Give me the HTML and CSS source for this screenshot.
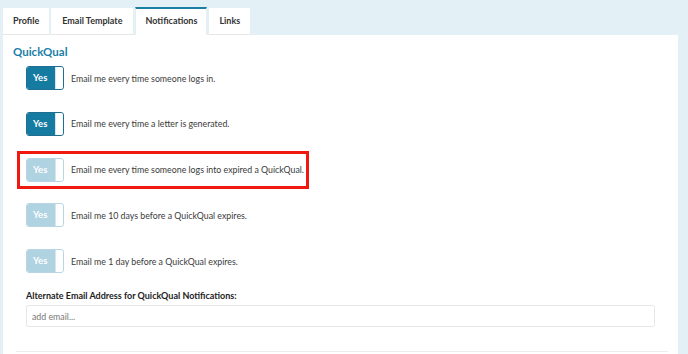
FILE: index.html
```html
<!DOCTYPE html>
<html lang="en">
  <head>
    <meta charset="UTF-8" />
    <title>Notifications</title>
    <link rel="stylesheet" href="styles.css">
  </head>
  <body>
    <div class="page">
      <!-- tabs -->
      <ul class="tabs">
        <li class="tab">Profile</li>
        <li class="tab">Email Template</li>
        <li class="tab active">Notifications</li>
        <li class="tab">Links</li>
      </ul>
      <!-- panel -->
      <div class="panel">
        <h2 class="title">QuickQual</h2>
        <div class="rows">
          <div class="row">
            <span class="toggle on"><span class="yes">Yes</span><span class="knob"></span></span>
            <span class="text">Email me every time someone logs in.</span>
          </div>
          <div class="row">
            <span class="toggle on"><span class="yes">Yes</span><span class="knob"></span></span>
            <span class="text">Email me every time a letter is generated.</span>
          </div>
          <div class="row marked">
            <span class="toggle"><span class="yes">Yes</span><span class="knob"></span></span>
            <span class="text">Email me every time someone logs into expired a QuickQual.</span>
          </div>
          <div class="row">
            <span class="toggle"><span class="yes">Yes</span><span class="knob"></span></span>
            <span class="text">Email me 10 days before a QuickQual expires.</span>
          </div>
          <div class="row">
            <span class="toggle"><span class="yes">Yes</span><span class="knob"></span></span>
            <span class="text">Email me 1 day before a QuickQual expires.</span>
          </div>
        </div>
        <div class="field">
          <label for="alt-email">Alternate Email Address for QuickQual Notifications:</label>
          <input type="text" id="alt-email" placeholder="add email..." />
        </div>
        <div class="rule"></div>
      </div>
    </div>
  </body>
</html>
```

FILE: styles.css
```css
* {
  padding: 0;
  margin: 0;
  box-sizing: border-box;
}
body {
  font-family: Lato, "Open Sans", sans-serif;
  background: #e3f1f7;
  color: #333;
  font-size: 9px;
}
.page {
  padding: 7px 10px 0 3px;
}
.tabs {
  list-style: none;
  display: flex;
  gap: 2px;
}
.tab {
  background: #fff;
  height: 27px;
  margin-top: 1px;
  padding: 0 10px;
  line-height: 26px;
  font-weight: bold;
  font-size: 9px;
  color: #333;
  border-bottom: 1px solid #e6e6e6;
}
.tab:nth-child(2) {
  padding: 0 11px;
}
.tab.active {
  margin-top: 0;
  height: 28px;
  border-top: 2px solid #1b80a6;
  border-left: 1px solid #e6eef2;
  border-right: 1px solid #e6eef2;
  border-bottom: none;
  line-height: 24px;
  padding: 0 9px;
}
.panel {
  background: #fff;
  height: 330px;
  padding: 9px 10px 0 10px;
}
.title {
  color: #1a7fa8;
  font-size: 11.5px;
  font-weight: bold;
  height: 15px;
  line-height: 15px;
}
.rows {
  display: flex;
  flex-direction: column;
  gap: 21.75px;
  margin-top: 7px;
}
.row {
  display: flex;
  align-items: center;
  gap: 7px;
  padding-left: 13px;
  height: 24px;
  white-space: nowrap;
}
.row.marked {
  margin: -7px 0 -7px 4px;
  height: 38px;
  padding-left: 6px;
  border: 3px solid #f0190f;
  width: 292px;
}
.toggle {
  display: flex;
  flex-shrink: 0;
  width: 38px;
  height: 24px;
  border: 1px solid #b7d5e2;
  border-radius: 3px;
  overflow: hidden;
  background: #fff;
}
.toggle .yes {
  width: 28px;
  background: #b0d3e1;
  color: #fff;
  font-weight: bold;
  font-size: 9.5px;
  line-height: 22px;
  padding-left: 6px;
}
.toggle.on {
  border-color: #1e6f91;
}
.toggle.on .yes {
  background: #167ba1;
}
.knob {
  flex: 1;
  background: #fff;
  border-left: 1px solid #d8e6ec;
  border-radius: 0 3px 3px 0;
}
.text {
  font-size: 8.8px;
  color: #3a3a3a;
}
.field {
  margin: 17px 13px 0 13px;
  display: flex;
  flex-direction: column;
  gap: 3px;
}
label {
  font-weight: bold;
  font-size: 9px;
  line-height: 12px;
  color: #222;
}
input {
  width: 100%;
  height: 22px;
  border: 1px solid #e8e8e8;
  border-radius: 2px;
  padding: 0 5px;
  font-family: Lato, sans-serif;
  font-size: 8.8px;
  outline: none;
}
input::placeholder {
  color: #777;
}
.rule {
  margin: 24px 0 0 3px;
  border-top: 1px solid #ededed;
}
```
